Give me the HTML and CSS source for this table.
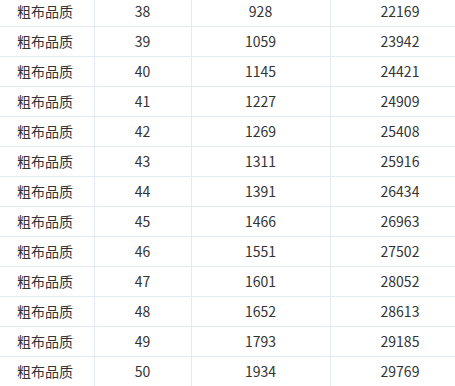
FILE: index.html
```html
<!DOCTYPE html>
<html lang="zh">
<head>
<meta charset="utf-8">
<link rel="stylesheet" href="styles.css">
</head>
<body>
<div class="viewport">
<table class="grid">
<colgroup><col class="c1"><col class="c2"><col class="c3"><col class="c4"></colgroup>
<tbody>
<tr><td class="name">粗布品质</td><td>38</td><td>928</td><td>22169</td></tr>
<tr><td class="name">粗布品质</td><td>39</td><td>1059</td><td>23942</td></tr>
<tr><td class="name">粗布品质</td><td>40</td><td>1145</td><td>24421</td></tr>
<tr><td class="name">粗布品质</td><td>41</td><td>1227</td><td>24909</td></tr>
<tr><td class="name">粗布品质</td><td>42</td><td>1269</td><td>25408</td></tr>
<tr><td class="name">粗布品质</td><td>43</td><td>1311</td><td>25916</td></tr>
<tr><td class="name">粗布品质</td><td>44</td><td>1391</td><td>26434</td></tr>
<tr><td class="name">粗布品质</td><td>45</td><td>1466</td><td>26963</td></tr>
<tr><td class="name">粗布品质</td><td>46</td><td>1551</td><td>27502</td></tr>
<tr><td class="name">粗布品质</td><td>47</td><td>1601</td><td>28052</td></tr>
<tr><td class="name">粗布品质</td><td>48</td><td>1652</td><td>28613</td></tr>
<tr><td class="name">粗布品质</td><td>49</td><td>1793</td><td>29185</td></tr>
<tr><td class="name">粗布品质</td><td>50</td><td>1934</td><td>29769</td></tr>
</tbody>
</table>
</div>
</body>
</html>
```
FILE: styles.css
```css
html, body {
  margin: 0;
  padding: 0;
  background: #fff;
  overflow: hidden;
}
.viewport {
  width: 455px;
  height: 386px;
  overflow: hidden;
}
.grid {
  margin-top: -3px;
  border-collapse: collapse;
  table-layout: fixed;
  width: 470px;
  font-family: "Noto Sans CJK SC", "Noto Sans", sans-serif;
  font-size: 14px;
  color: #333;
}
.c1 { width: 94px; }
.c2 { width: 97px; }
.c3 { width: 139px; }
.c4 { width: 140px; }
.grid td {
  height: 29px;
  padding: 0;
  border-bottom: 1px solid #e4eaf1;
  border-right: 1px solid #e4eaf1;
  text-align: center;
  line-height: 29px;
  white-space: nowrap;
}
.grid td.name {
  text-align: left;
  padding-left: 17px;
}
```
